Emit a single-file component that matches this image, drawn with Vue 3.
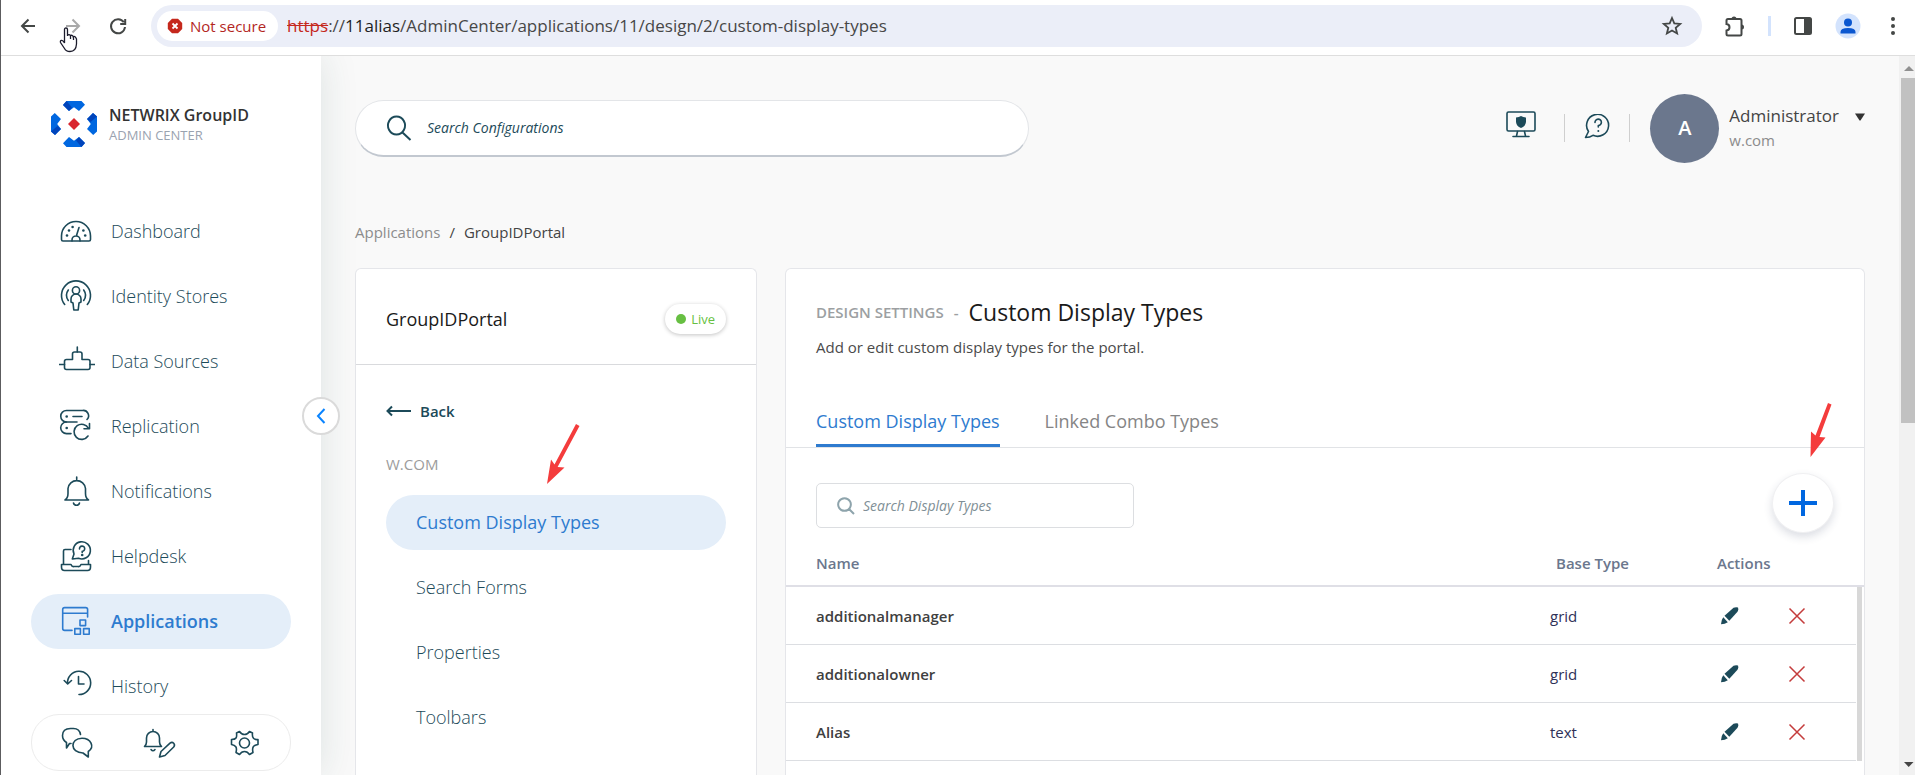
<script setup>
import { ref } from 'vue'

const nav = [
  {
    label: 'Dashboard',
    paths: [
      'M4 28H30Q31.5 28 31.5 26.5V23A14.5 14.5 0 0 0 2.5 23V26.5Q2.5 28 4 28Z',
      'M13 28V27A4 4 0 0 1 21 27V28M17.5 22.5L20 14.5',
    ],
    dots: [[8, 22.5], [10, 17.5], [13.6, 14], [24.4, 17.5], [26.2, 22.5]],
  },
  {
    label: 'Identity Stores',
    paths: [
      'M5.7 26.5A14.5 14.5 0 1 1 28.3 26.5',
      'M9.3 12A9 9 0 0 0 9.3 22.5M24.7 12A9 9 0 0 1 24.7 22.5',
      'M17 8.8A3.6 3.6 0 1 0 17 16A3.6 3.6 0 1 0 17 8.8',
      'M12 24V21A5 5 0 0 1 22 21V24L20 25L19.2 32H14.8L14 25Z',
    ],
  },
  {
    label: 'Data Sources',
    paths: [
      'M13.5 16.5V11Q13.5 9 15.5 9H21Q23 9 23 11V16.5H29Q31 16.5 31 18.5V24.5Q31 26.5 29 26.5H7.5Q5.5 26.5 5.5 24.5V18.5Q5.5 16.5 7.5 16.5Z',
      'M18.3 9V4M.5 21.5H5.5M31 21.5H36',
    ],
  },
  {
    label: 'Replication',
    paths: [
      'M18 14H7.5A5.7 5.7 0 0 1 7.5 2.5H23.5A5.3 5.3 0 0 1 28 11.5M14 8.5H23',
      'M7.5 14A5.8 5.8 0 0 0 7.5 25.6H12M29.5 20.5A7.6 7.6 0 1 0 29 28M30.5 15.5V20.8H25',
    ],
    dots: [[7.7, 8.5], [7.7, 20]],
  },
  {
    label: 'Notifications',
    paths: [
      'M6 27H29.5Q26.5 25 26.5 20.5V15.5A8.8 8.8 0 0 0 9 15.5V20.5Q9 25 6 27ZM17.7 6.5V4',
      'M14.5 30Q15 32.2 17.5 32.2Q20 32.2 20.5 30',
    ],
  },
  {
    label: 'Helpdesk',
    paths: [
      'M13.3 21L15 16A8.6 8.6 0 1 1 19.5 20.3Z',
      'M12 11.5H6Q4.5 11.5 4.5 13V26M29.5 22.5V26M2.5 26.5H12Q13 29 15 28.5H19Q21 29 22 26.5H31.5V29Q31.5 32.5 28.5 32.5H5.5Q2.5 32.5 2.5 29Z',
      'M20.5 11A2.6 2.6 0 1 1 23.2 13.3V14.5',
    ],
    dots: [[23.2, 17]],
  },
  {
    label: 'Applications',
    paths: [
      'M28.6 14V6.5Q28.6 4.6 26.7 4.6H5.6Q3.7 4.6 3.7 6.5V25.5Q3.7 27.4 5.6 27.4H13M3.7 10.3H28.6',
      'M21 17H26.6V22.6H21ZM15.8 25.6H21.4V31.2H15.8ZM24.6 25.6H30.2V31.2H24.6Z',
    ],
    active: true,
  },
  {
    label: 'History',
    paths: [
      'M8.5 15.5A11.6 11.6 0 1 1 20 26.5M5.2 12.5L8.7 16L12.5 12.5',
      'M19.5 8.5V16H25',
    ],
  },
]

const tools = [
  {
    label: 'Chat',
    paths: [
      'M21.5 9.5Q20.5 3.5 14.5 3.5H11.5Q3.5 3.5 3.5 10.5Q3.5 15 7.5 17.5V23L10.5 18.5H12',
      'M23 13.2C10.8 13.2 10.8 28 24 28L29.3 32V26.5C36 22 32 13.2 23 13.2Z',
    ],
  },
  {
    label: 'Notification settings',
    paths: [
      'M2.5 21.5H19.5Q17.5 19.5 17.5 17V13A6.5 6.5 0 0 0 4.5 13V17Q4.5 19.5 2.5 21.5ZM11 6.5V4.5M9 24.5Q11 27 13 24.5',
      'M17.5 32L19 26.5L28 18.2Q30 16.5 31.7 18.2Q33.3 20 31.7 22L23 30.5Z',
    ],
  },
  {
    label: 'Settings',
    paths: [
      'M15.5 6.5Q17.5 9.5 20.5 9.5T25.5 6.5L28.5 8Q28 11.5 29.5 13.2T34 14.5V19.5Q30.5 20 29.3 21.8T29 27.5L25.5 29.5Q23.5 26.5 20.5 26.5T15.5 29.5L12 27.5Q13 23.5 11.8 21.8T7.5 19.5V14.5Q11 14.5 12 13T12.5 8Z',
      'M20.5 13A5 5 0 1 0 20.5 23A5 5 0 1 0 20.5 13',
    ],
  },
]

const menu = ['Custom Display Types', 'Search Forms', 'Properties', 'Toolbars']
const tabs = ['Custom Display Types', 'Linked Combo Types']
const rows = [
  { name: 'additionalmanager', type: 'grid' },
  { name: 'additionalowner', type: 'grid' },
  { name: 'Alias', type: 'text' },
]

const address = ref('')
const query = ref('')
const filter = ref('')
</script>

<template>
  <div class="window">
    <header class="browser">
      <button class="plain" aria-label="Back">
        <svg width="20" height="20" viewBox="0 0 20 20" class="chrome-icon"><path d="M17 10H4M10.500 3.500L4 10l6.500 6.500" /></svg>
      </button>
      <button class="plain dim" aria-label="Forward">
        <svg width="20" height="20" viewBox="0 0 20 20" class="chrome-icon"><path d="M3 10H16M9.500 3.500L16 10l-6.500 6.500" /></svg>
      </button>
      <button class="plain" aria-label="Reload">
        <svg width="20" height="20" viewBox="0 0 20 20" class="chrome-icon"><path d="M15.800 6.300A7 7 0 1 0 17 11M17.200 3V8H12.200" /></svg>
      </button>
      <div class="address">
        <span class="insecure">
          <svg width="16" height="16" viewBox="0 0 16 16">
            <path d="M5 .8H11L15.200 5V11L11 15.200H5L.8 11V5Z" fill="#c5281c" />
            <path d="M5.500 5.500l5 5M10.500 5.500l-5 5" stroke="#fff" stroke-width="1.800" />
          </svg>
          Not secure
        </span>
        <label class="url">
          <span><s>https</s>://<b>11alias</b>/AdminCenter/applications/11/design/2/custom-display-types</span>
          <input v-model="address" type="text" aria-label="Address" />
        </label>
        <button class="plain" aria-label="Bookmark">
          <svg width="22" height="22" viewBox="0 0 22 22" class="chrome-icon thin"><path d="M11 3l2.300 5.400 5.900.5-4.500 3.900 1.400 5.700L11 15.500l-5.100 3 1.400-5.700L2.800 8.900l5.900-.5z" /></svg>
        </button>
      </div>
      <div class="chrome-actions">
        <button class="plain" aria-label="Extensions">
          <svg width="24" height="24" viewBox="0 0 24 24" class="chrome-icon"><path d="M4.500 6.500q0-1.500 1.500-1.500H18q1.500 0 1.500 1.500V20q0 1.500-1.500 1.500H6q-1.500 0-1.500-1.500V16.500q3-.5 3-3.300t-3-3.200z" /><path d="M9.500 5a2.500 2.500 0 0 1 5 0zM19.500 10.500a2.500 2.500 0 0 1 0 5z" fill="#444746" stroke="none" /></svg>
        </button>
        <i class="chrome-sep"></i>
        <button class="plain" aria-label="Side panel">
          <svg width="20" height="20" viewBox="0 0 20 20"><rect x="2" y="2" width="16" height="16" rx="1.500" fill="none" stroke="#444746" stroke-width="2" /><path d="M11 2h7v16h-7z" fill="#444746" /></svg>
        </button>
        <button class="plain" aria-label="Profile">
          <svg width="26" height="26" viewBox="0 0 26 26"><circle cx="13" cy="13" r="12.500" fill="#d3e3fd" /><circle cx="13" cy="9.500" r="4" fill="#0b57d0" /><path d="M5.500 20.500V19q0-4 7.500-4t7.500 4v1.500z" fill="#0b57d0" /></svg>
        </button>
        <button class="plain" aria-label="Menu">
          <svg width="20" height="20" viewBox="0 0 20 20" fill="#444746"><circle cx="10" cy="3" r="2" /><circle cx="10" cy="10" r="2" /><circle cx="10" cy="17" r="2" /></svg>
        </button>
      </div>
      <svg class="cursor" width="20" height="26" viewBox="0 0 20 26"><path d="M5.500 2.500Q5.500 1 7 1T8.500 2.500V9Q8.700 7.500 10 7.700T11.500 9Q12 8 13 8.400T14.200 9.800Q15.200 9 16 9.700T17.500 12V17Q17 24.500 11 24.500 7 24.500 5.500 21.500L1.500 15.500Q1 13.500 2.500 13.300T5.500 16ZM11.500 9V12M14.500 10V13" fill="#fff" stroke="#1b1b2b" stroke-width="1.300" /></svg>
    </header>

    <div class="app">
      <aside class="sidebar">
        <a href="#" class="brand">
          <svg width="46" height="46" viewBox="0 0 46 46">
            <g v-for="turn in [0, 90, 180, 270]" :key="turn" :transform="`rotate(${turn} 23 23)`">
              <path d="M15.500 0H30.500L34 3.800 28 10 23 6.200 18 10 12 4Z" fill="#0067e0" />
              <path d="M15.500 0L21 6.500 18 10 12 4Z" fill="#0044bb" />
            </g>
            <path d="M23 17L29 23 23 29 17 23Z" fill="#d9262f" />
          </svg>
          <span class="brand-text">
            <strong>NETWRIX GroupID</strong>
            <small>ADMIN CENTER</small>
          </span>
        </a>
        <nav class="nav">
          <a v-for="item in nav" :key="item.label" href="#" class="pill nav-item" :class="{ active: item.active }">
            <svg class="line-icon" width="36" height="36" viewBox="0 0 36 36">
              <path v-for="d in item.paths" :key="d" :d="d" />
              <circle v-for="(p, i) in item.dots" :key="i" :cx="p[0]" :cy="p[1]" r="1.300" />
            </svg>
            {{ item.label }}
          </a>
        </nav>
        <div class="tools">
          <button v-for="tool in tools" :key="tool.label" class="plain" :aria-label="tool.label">
            <svg class="line-icon" width="36" height="36" viewBox="0 0 36 36"><path v-for="d in tool.paths" :key="d" :d="d" /></svg>
          </button>
        </div>
        <button class="collapse" aria-label="Collapse sidebar">
          <svg width="10" height="16" viewBox="0 0 10 16"><path d="M8.500 1L2 8l6.500 7" fill="none" stroke="#0a84ff" stroke-width="2" /></svg>
        </button>
      </aside>

      <main class="content">
        <div class="topbar">
          <label class="search">
            <svg width="28" height="28" viewBox="0 0 28 28"><path d="M11.500 2.500a8.500 9 0 1 0 .01 0M17.500 18.500L25.500 26" /></svg>
            <input v-model="query" type="text" placeholder="Search Configurations" aria-label="Search Configurations" />
          </label>
          <div class="account">
            <button class="plain monitor" aria-label="Security">
              <svg class="line-icon" width="32" height="28" viewBox="0 0 32 28"><rect x="2" y="1" width="28" height="19" rx="1.500" /><path d="M12.500 20.500L11.500 25M19.500 20.500L20.500 25M8 25.500H24" /><path d="M11 6.500Q14 6.300 16 5 18 6.300 21 6.500V11Q20.500 15.500 16 17 11.500 15.500 11 11Z" fill="#1c4a59" stroke="none" /></svg>
            </button>
            <i class="sep"></i>
            <button class="plain" aria-label="Help">
              <svg class="line-icon" width="28" height="28" viewBox="0 0 28 28"><path d="M2.500 23.500L5.500 17.500A11 11 0 1 1 10 21.300Q7 23.500 2.500 23.500ZM12 8.500A3.200 3.200 0 1 1 15.300 11.500V13" /><circle cx="15.300" cy="17" r="1" /></svg>
            </button>
            <i class="sep"></i>
            <button class="plain user">
              <span class="avatar">A</span>
              <span class="who"><b>Administrator</b><small>w.com</small></span>
              <svg width="10" height="8" viewBox="0 0 10 8"><path d="M0 .5H10L5.500 7.500H4.500Z" fill="#333" /></svg>
            </button>
          </div>
        </div>

        <nav class="crumbs" aria-label="Breadcrumb">
          <a href="#">Applications</a><span>/</span><span>GroupIDPortal</span>
        </nav>

        <div class="cards">
          <section class="card side">
            <header class="side-head">
              <h2>GroupIDPortal</h2>
              <span class="live"><i></i>Live</span>
            </header>
            <div class="side-body">
              <a href="#" class="back">
                <svg width="26" height="12" viewBox="0 0 26 12"><path d="M25 6H2M6 1.500L1.500 6 6 10.500" /></svg>
                Back
              </a>
              <h3>W.COM</h3>
              <nav class="menu">
                <a v-for="(m, i) in menu" :key="m" href="#" class="pill menu-item" :class="{ active: i === 0 }">{{ m }}</a>
              </nav>
              <svg class="pointer one" width="34" height="62" viewBox="0 0 34 62"><path d="M30 1L33.500 3 11.600 44 18.500 44.500 1 61 5 36.500 8.500 41.500Z" /></svg>
            </div>
          </section>

          <section class="card main">
            <header class="main-head">
              <div class="heading"><span>DESIGN SETTINGS</span><span>-</span><h1>Custom Display Types</h1></div>
              <p>Add or edit custom display types for the portal.</p>
            </header>
            <div class="tabs" role="tablist">
              <button v-for="(t, i) in tabs" :key="t" role="tab" class="plain tab" :class="{ on: i === 0 }" :aria-selected="i === 0">{{ t }}</button>
            </div>
            <div class="toolbar">
              <label class="filter">
                <svg width="18" height="18" viewBox="0 0 18 18"><path d="M7.500 1.200a6.300 6.300 0 1 0 .01 0M12 12l5 5" /></svg>
                <input v-model="filter" type="text" placeholder="Search Display Types" aria-label="Search Display Types" />
              </label>
              <button class="add" aria-label="Add display type">
                <svg width="28" height="28" viewBox="0 0 28 28"><path d="M14 1V27M0 14H28" stroke="#0067e0" stroke-width="4" /></svg>
              </button>
              <svg class="pointer two" width="24" height="56" viewBox="0 0 24 56"><path d="M19 1L22.500 2.500 10.500 35 16.500 35.500 1.500 55 2 29.500 6.500 33.500Z" /></svg>
            </div>
            <div class="grid">
              <table>
                <thead>
                  <tr><th class="c-name">Name</th><th class="c-type">Base Type</th><th class="c-act">Actions</th></tr>
                </thead>
                <tbody>
                  <tr v-for="row in rows" :key="row.name">
                    <td class="c-name">{{ row.name }}</td>
                    <td class="c-type">{{ row.type }}</td>
                    <td class="c-act">
                      <div class="actions">
                        <button class="plain" :aria-label="`Edit ${row.name}`">
                          <svg width="18" height="18" viewBox="0 0 18 18" fill="#1c4a59"><path d="M3.500 8.800L12.500 .8Q14.500-.2 17 .4 17.800 3.300 16.300 5L8.300 13.700Z" /><path d="M2.300 10.200L6.800 15.300Q4 17.300 0 17.300 0 13 2.300 10.200Z" /></svg>
                        </button>
                        <button class="plain" :aria-label="`Delete ${row.name}`">
                          <svg width="18" height="18" viewBox="0 0 18 18"><path d="M1.500 1.500l15 15M16.500 1.500l-15 15" stroke="#c43c3c" stroke-width="1.500" /></svg>
                        </button>
                      </div>
                    </td>
                  </tr>
                </tbody>
              </table>
              <div class="grid-scroll"></div>
            </div>
          </section>
        </div>
      </main>

      <div class="page-scroll">
        <svg width="14" height="22" viewBox="0 0 14 22"><path d="M3 15L8 10 13 15Z" fill="#8f8f8f" /></svg>
        <i></i>
        <svg width="14" height="22" viewBox="0 0 14 22"><path d="M3 9H12.500L7.700 14Z" fill="#444" /></svg>
      </div>
    </div>
  </div>
</template>

<style>
html,
body {
  margin: 0;
  overflow: hidden;
}
</style>

<style scoped>
.window {
  box-sizing: border-box;
  display: flex;
  flex-direction: column;
  height: 100vh;
  overflow: hidden;
  border-left: 1px solid #5c5c5e;
  background: #fff;
  color: #1c4a59;
  font: 15px/20px "Open Sans", "Noto Sans", sans-serif;
}
.window *,
.window *::before {
  box-sizing: border-box;
}
a {
  color: inherit;
  text-decoration: none;
}
input {
  min-width: 0;
  border: 0;
  outline: 0;
  background: none;
  color: inherit;
  font: inherit;
}
svg {
  display: block;
  flex: none;
}
.plain {
  display: block;
  padding: 0;
  border: 0;
  background: none;
  color: inherit;
  font: inherit;
}
.line-icon {
  fill: none;
  stroke: currentColor;
  stroke-width: 1.6;
  stroke-linecap: round;
  stroke-linejoin: round;
}
.line-icon circle {
  fill: currentColor;
  stroke: none;
}

/* Browser bar */
.browser {
  position: relative;
  display: flex;
  align-items: center;
  flex: none;
  gap: 25px;
  height: 56px;
  padding: 0 12px 4px 17px;
  border-bottom: 1px solid #dedede;
}
.chrome-icon {
  fill: none;
  stroke: #444746;
  stroke-width: 2;
}
.chrome-icon.thin {
  stroke-width: 1.8;
}
.dim .chrome-icon {
  stroke: #a9a9a9;
}
.address {
  display: flex;
  align-items: center;
  flex: 1;
  height: 42px;
  padding: 0 19px 0 6px;
  margin: 0 -5px 0 -2px;
  border-radius: 21px;
  background: #ebeef8;
}
.insecure {
  display: flex;
  align-items: center;
  gap: 7px;
  height: 30px;
  padding: 0 12px 0 10px;
  border-radius: 15px;
  background: #fff;
  color: #b3261e;
}
.url {
  display: flex;
  flex: 1;
  margin-left: 9px;
  padding-top: 2px;
  color: #474747;
  font-size: 17px;
}
.url input {
  flex: 1;
}
.url s {
  color: #c5281c;
}
.url b {
  color: #1f1f1f;
  font-weight: 400;
}
.chrome-actions {
  display: flex;
  align-items: center;
  gap: 22px;
}
.chrome-sep {
  width: 3px;
  height: 20px;
  background: #d3e3fd;
}
.cursor {
  position: absolute;
  left: 58px;
  top: 27px;
}

/* Sidebar */
.app {
  display: flex;
  flex: 1;
  min-height: 0;
}
.sidebar {
  position: relative;
  z-index: 1;
  display: flex;
  flex-direction: column;
  flex: none;
  width: 320px;
  padding: 45px 30px 0;
  background: #fff;
  box-shadow: 0 0 36px rgba(28, 74, 70, 0.13);
  clip-path: inset(0 -60px 0 0);
}
.brand {
  display: flex;
  gap: 12px;
  height: 103px;
  padding-left: 20px;
}
.brand-text {
  display: flex;
  flex-direction: column;
  padding-top: 4px;
  white-space: nowrap;
}
.brand strong {
  color: #333;
  font-size: 16px;
  font-weight: 600;
}
.brand small {
  color: #9aa3b0;
  font-size: 13px;
  font-weight: 500;
}
.nav,
.menu {
  display: flex;
  flex-direction: column;
  gap: 10px;
}
.pill {
  display: flex;
  align-items: center;
  flex: none;
  height: 55px;
  padding-bottom: 2px;
  border-radius: 28px;
  font-size: 18px;
  font-weight: 300;
}
.nav-item {
  gap: 16px;
  padding-left: 28px;
}
.pill.active {
  background: #e4eef9;
  color: #2e7bcf;
  font-weight: 500;
}
.pill.nav-item.active {
  font-weight: 600;
}
.tools {
  display: flex;
  align-items: center;
  justify-content: space-between;
  flex: none;
  height: 57px;
  padding: 0 30px 0 27px;
  border: 1px solid #ececec;
  border-radius: 28px;
}
.collapse {
  position: absolute;
  right: -19px;
  top: 341px;
  display: flex;
  align-items: center;
  justify-content: center;
  width: 38px;
  height: 38px;
  padding: 0;
  border: 2px solid #dadada;
  border-radius: 50%;
  background: #fff;
}

/* Content */
.content {
  display: flex;
  flex-direction: column;
  flex: 1;
  min-width: 0;
  padding: 38px 34px 0 34px;
  background: #f9f9f9;
}
.topbar {
  display: flex;
  align-items: center;
  justify-content: space-between;
  height: 68px;
}
.search {
  display: flex;
  align-items: center;
  gap: 14px;
  width: 674px;
  height: 57px;
  padding: 0 29px;
  border: 1px solid #e3e5e8;
  border-bottom: 2px solid #c2c8d0;
  border-radius: 29px;
  background: #fff;
  font-style: italic;
  font-weight: 500;
}
.search svg,
.filter svg {
  fill: none;
  stroke: #1c4a59;
  stroke-width: 2;
}
.search input,
.filter input {
  flex: 1;
  padding: 0;
  font-size: 14px;
}
.search input::placeholder,
.filter input::placeholder {
  color: inherit;
  opacity: 1;
}
.account {
  display: flex;
  align-items: center;
  gap: 18px;
}
.monitor {
  padding: 0 9px 6px;
}
.sep {
  width: 1px;
  height: 28px;
  background: #cfcfcf;
}
.user {
  display: flex;
  align-items: center;
  gap: 10px;
  padding-left: 2px;
  text-align: left;
}
.avatar {
  display: flex;
  align-items: center;
  justify-content: center;
  width: 69px;
  height: 69px;
  border-radius: 50%;
  background: #6b778d;
  color: #fff;
  font-size: 20px;
  font-weight: 600;
}
.who {
  display: flex;
  flex-direction: column;
  gap: 4px;
}
.who b {
  color: #444;
  font-size: 17px;
  font-weight: 500;
}
.who small {
  color: #8c8c8c;
  font-size: 15px;
}
.user svg {
  margin: -22px 0 0 6px;
}
.crumbs {
  display: flex;
  gap: 9px;
  margin-top: 60px;
  color: #444;
}
.crumbs a {
  color: #8c8c8c;
}
.cards {
  display: flex;
  gap: 28px;
  flex: 1;
  min-height: 0;
  margin-top: 26px;
}
.card {
  border: 1px solid #e5e6ea;
  border-bottom: 0;
  border-radius: 6px 6px 0 0;
  background: #fff;
}
.side {
  flex: none;
  width: 402px;
}
.side-head {
  display: flex;
  align-items: center;
  justify-content: space-between;
  height: 96px;
  padding: 5px 30px 0;
  border-bottom: 1px solid #d9dadd;
}
h2 {
  margin: 0;
  color: #1a1a1a;
  font-size: 18px;
  font-weight: 500;
}
.live {
  display: flex;
  align-items: center;
  gap: 5px;
  height: 30px;
  padding: 0 11px;
  border-radius: 15px;
  box-shadow: 0 1px 4px rgba(0, 0, 0, 0.24);
  color: #67bf42;
  font-size: 13px;
}
.live i {
  width: 10px;
  height: 10px;
  border-radius: 50%;
  background: #67bf42;
}
.side-body {
  position: relative;
  padding: 36px 30px 0;
}
.back {
  display: flex;
  align-items: center;
  gap: 8px;
  font-weight: 600;
}
.back svg {
  fill: none;
  stroke: #1c4a59;
  stroke-width: 2;
}
h3 {
  margin: 33px 0 21px;
  color: #9c9c9c;
  font-size: 15px;
  font-weight: 400;
}
.menu-item {
  padding-left: 30px;
}
.pointer {
  position: absolute;
  fill: #f43c3c;
}
.pointer.one {
  left: 190px;
  top: 58px;
}
.pointer.two {
  right: 31px;
  top: -46px;
}
.main {
  flex: 1;
  min-width: 0;
}
.main-head {
  padding: 28px 30px 0;
}
.heading {
  display: flex;
  align-items: center;
  gap: 10px;
  height: 30px;
  color: #9c9fa2;
  font-weight: 600;
}
h1 {
  margin: 0;
  color: #1a1a1a;
  font-size: 23px;
  font-weight: 500;
}
.main-head p {
  margin: 10px 0 0;
  color: #4a4a4a;
}
.tabs {
  display: flex;
  gap: 45px;
  height: 91px;
  padding: 0 30px;
  border-bottom: 1px solid #e1e3e6;
}
.tab {
  padding-top: 40px;
  border-bottom: 3px solid transparent;
  color: #858585;
  font-size: 18px;
  font-weight: 500;
}
.tab.on {
  border-color: #2e7bcf;
  color: #2e7bcf;
}
.toolbar {
  position: relative;
  display: flex;
  align-items: center;
  justify-content: space-between;
  height: 105px;
  padding: 4px 30px 0;
}
.filter {
  display: flex;
  align-items: center;
  gap: 8px;
  width: 318px;
  height: 45px;
  margin-top: 6px;
  padding: 0 20px;
  border: 1px solid #dcdee1;
  border-radius: 5px;
  color: #7f8f96;
  font-style: italic;
}
.filter svg {
  stroke: #8ea4ac;
}
.add {
  display: flex;
  align-items: center;
  justify-content: center;
  width: 62px;
  height: 60px;
  padding: 0;
  border: 1px solid #f0f0f2;
  border-radius: 50%;
  background: #fff;
  box-shadow: 0 4px 9px rgba(40, 50, 90, 0.16);
}
.grid {
  position: relative;
}
table {
  width: 100%;
  border-collapse: separate;
  border-spacing: 0;
  table-layout: fixed;
}
th {
  height: 32px;
  padding: 0 0 12px;
  border-bottom: 2px solid #dfdfe6;
  color: #6b778d;
  font-weight: 600;
  text-align: left;
}
td {
  height: 58px;
  padding: 0;
  border-bottom: 1px solid #dcdee2;
  color: #2f3158;
}
td.c-name {
  color: #404040;
  font-weight: 600;
}
.c-name {
  padding-left: 30px;
}
.c-type {
  width: 167px;
}
th.c-type {
  padding-left: 6px;
}
.c-act {
  width: 147px;
}
.actions {
  display: flex;
  gap: 49px;
  padding-left: 4px;
}
.grid-scroll {
  position: absolute;
  top: 34px;
  right: 0;
  bottom: 0;
  width: 8px;
  border-left: 1px solid #fff;
  border-right: 2px solid #fff;
  background: #d8d8d8;
}

/* Page scrollbar */
.page-scroll {
  display: flex;
  flex-direction: column;
  flex: none;
  width: 16px;
  padding-left: 2px;
  background: #f1f1f1;
}
.page-scroll svg:last-child {
  margin-top: auto;
}
.page-scroll i {
  flex: 0 0 48%;
  background: #c1c1c1;
}
</style>
